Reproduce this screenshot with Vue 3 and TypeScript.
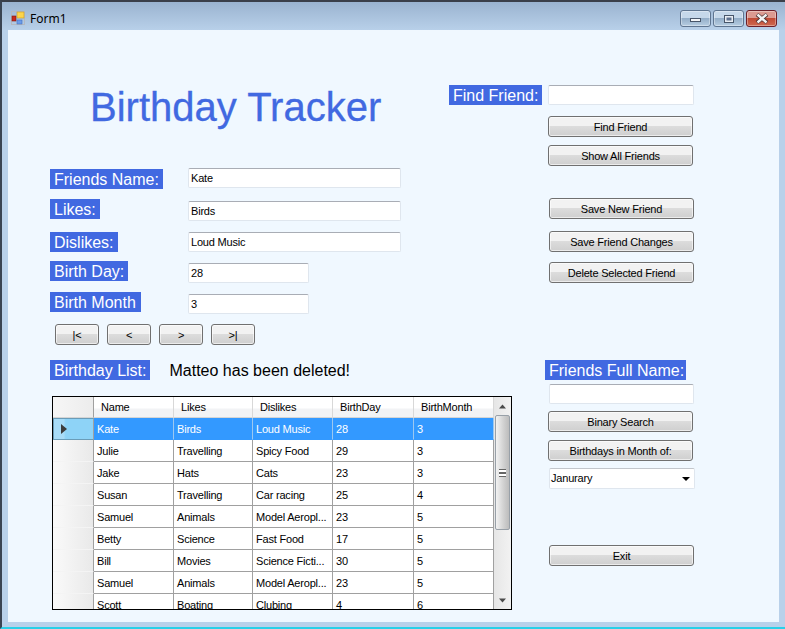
<script setup lang="ts">
interface Friend {
  name: string
  likes: string
  dislikes: string
  day: string
  month: string
}

const friends: Friend[] = [
  { name: 'Kate', likes: 'Birds', dislikes: 'Loud Music', day: '28', month: '3' },
  { name: 'Julie', likes: 'Travelling', dislikes: 'Spicy Food', day: '29', month: '3' },
  { name: 'Jake', likes: 'Hats', dislikes: 'Cats', day: '23', month: '3' },
  { name: 'Susan', likes: 'Travelling', dislikes: 'Car racing', day: '25', month: '4' },
  { name: 'Samuel', likes: 'Animals', dislikes: 'Model Aeropl...', day: '23', month: '5' },
  { name: 'Betty', likes: 'Science', dislikes: 'Fast Food', day: '17', month: '5' },
  { name: 'Bill', likes: 'Movies', dislikes: 'Science Ficti...', day: '30', month: '5' },
  { name: 'Samuel', likes: 'Animals', dislikes: 'Model Aeropl...', day: '23', month: '5' },
  { name: 'Scott', likes: 'Boating', dislikes: 'Clubing', day: '4', month: '6' }
]

const headers = ['Name', 'Likes', 'Dislikes', 'BirthDay', 'BirthMonth']
const navButtons = ['|<', '<', '>', '>|']
</script>

<template>
  <div class="window">
    <header class="titlebar">
      <svg class="appicon" width="16" height="16" viewBox="0 0 16 16">
        <rect x="0.5" y="0.5" width="13" height="13" fill="none" stroke="#b5b9c0" />
        <rect x="1" y="5" width="4" height="5" fill="#c8281c" stroke="#7c1a12" stroke-width="0.6" />
        <rect x="6" y="1" width="7" height="6" fill="#fcd44c" stroke="#c89a20" stroke-width="0.6" />
        <rect x="6" y="9" width="5" height="4" fill="#6c9ce8" stroke="#4470c0" stroke-width="0.6" />
      </svg>
      <span class="title">Form1</span>
      <div class="controls">
        <div class="ctl">
          <svg width="14" height="8" viewBox="0 0 14 8"><rect x="1.5" y="3.5" width="10" height="3" fill="#f4f6f8" stroke="#48566a" /></svg>
        </div>
        <div class="ctl">
          <svg width="14" height="10" viewBox="0 0 14 10"><rect x="2.5" y="1.5" width="9" height="7" fill="#e8edf3" stroke="#48566a" /><rect x="4.5" y="3.5" width="5" height="3" fill="#5f7290" /></svg>
        </div>
        <div class="ctl close">
          <svg width="16" height="11" viewBox="0 0 16 11"><path d="M3 1.5 L13 9.5 M13 1.5 L3 9.5" stroke="#4a3030" stroke-width="4" /><path d="M3.5 1.5 L12.5 9.5 M12.5 1.5 L3.5 9.5" stroke="#f2f2f2" stroke-width="2.4" /></svg>
        </div>
      </div>
    </header>

    <main class="client">
      <section class="top">
        <div class="details">
          <h1 class="heading">Birthday Tracker</h1>
          <div class="row r1"><span class="label">Friends Name:</span><div class="input long">Kate</div></div>
          <div class="row r2"><span class="label">Likes:</span><div class="input long in2">Birds</div></div>
          <div class="row r3"><span class="label">Dislikes:</span><div class="input long">Loud Music</div></div>
          <div class="row r4"><span class="label">Birth Day:</span><div class="input short in2">28</div></div>
          <div class="row r5"><span class="label wide">Birth Month</span><div class="input short in2">3</div></div>
          <div class="nav">
            <button v-for="n in navButtons" :key="n" class="btn navbtn">{{ n }}</button>
          </div>
        </div>
        <div class="actions">
          <div class="find"><span class="label">Find Friend:</span><div class="input findinput"></div></div>
          <button class="btn b1">Find Friend</button>
          <button class="btn b2">Show All Friends</button>
          <button class="btn b3">Save New Friend</button>
          <button class="btn b4">Save Friend Changes</button>
          <button class="btn b5">Delete Selected Friend</button>
        </div>
      </section>

      <section class="bottom">
        <div class="listside">
          <div class="listhead">
            <span class="label">Birthday List:</span>
            <span class="message">Matteo has been deleted!</span>
          </div>
          <div class="grid">
            <div class="gridmain">
              <div class="hrow">
                <div class="corner"></div>
                <div v-for="h in headers" :key="h" class="hcell">{{ h }}</div>
              </div>
              <div v-for="(f, i) in friends" :key="i" class="drow" :class="{ selected: i === 0 }">
                <div class="rowhead">
                  <svg v-if="i === 0" width="6" height="10" viewBox="0 0 6 10"><path d="M0 0 L6 5 L0 10 Z" fill="#3c3c3c" /></svg>
                </div>
                <div class="cell">{{ f.name }}</div>
                <div class="cell">{{ f.likes }}</div>
                <div class="cell">{{ f.dislikes }}</div>
                <div class="cell">{{ f.day }}</div>
                <div class="cell">{{ f.month }}</div>
              </div>
            </div>
            <div class="scroll">
              <svg class="arrow" width="9" height="5" viewBox="0 0 9 5"><path d="M4.5 0.5 L8 4.5 L1 4.5 Z" fill="#4a4a4a" /></svg>
              <div class="thumb"><span class="grip"></span></div>
              <svg class="arrow down" width="9" height="5" viewBox="0 0 9 5"><path d="M1 0.5 L8 0.5 L4.5 4.5 Z" fill="#4a4a4a" /></svg>
            </div>
          </div>
        </div>
        <div class="searchside">
          <span class="label">Friends Full Name:</span>
          <div class="input fullname"></div>
          <button class="btn s1">Binary Search</button>
          <button class="btn s2">Birthdays in Month of:</button>
          <div class="combo">
            <span>Janurary</span>
            <svg width="8" height="4" viewBox="0 0 8 4"><path d="M0 0 L8 0 L4 4 Z" fill="#000" /></svg>
          </div>
          <button class="btn exit">Exit</button>
        </div>
      </section>
    </main>
  </div>
</template>

<style>
html, body { margin: 0; padding: 0; background: #b9d1ea; }
</style>

<style scoped>
.window {
  width: 785px;
  height: 629px;
  box-sizing: border-box;
  display: flex;
  flex-direction: column;
  background: #b9d1ea;
  border-top: 2px solid #3a3f4a;
  border-left: 2px solid #3a4452;
  border-bottom: 2px solid #2ad0e8;
  font-family: "Liberation Sans", Arial, sans-serif;
  overflow: hidden;
}
.titlebar {
  height: 28px;
  flex: none;
  display: flex;
  align-items: flex-start;
  padding-left: 9px;
  background: linear-gradient(#9ab3d0, #b8d0e9);
}
.appicon { margin-top: 9px; }
.title {
  margin-left: 3px;
  margin-top: 8px;
  font: 12px/18px "Noto Sans", sans-serif;
  color: #000;
}
.controls {
  margin-left: auto;
  margin-right: 8px;
  margin-top: 8px;
  display: flex;
  gap: 2px;
}
.ctl {
  width: 31px;
  height: 17px;
  box-sizing: border-box;
  border: 1px solid #5f7590;
  border-radius: 3px;
  display: flex;
  align-items: center;
  justify-content: center;
  background: linear-gradient(#c6d8ea 0 45%, #94aec8 50%, #b6cde2);
  box-shadow: inset 0 0 0 1px rgba(255,255,255,.35);
}
.ctl.close {
  border-color: #6c1f28;
  background: linear-gradient(#dc9a90 0 45%, #c04a34 50%, #cf6a50);
}
.client {
  width: 771px;
  height: 592px;
  margin-left: 6px;
  background: #f0f8ff;
  display: flex;
  flex-direction: column;
}
.top { display: flex; height: 330px; flex: none; }
.details { margin-left: 42px; width: 351px; }
.heading {
  margin: 55px 0 0 40px;
  height: 44px;
  font: 400 40px/44px "Liberation Sans", Arial, sans-serif;
  -webkit-text-stroke: 0.3px #4169e1;
  color: #4169e1;
  white-space: nowrap;
}
.label {
  display: inline-block;
  height: 20px;
  line-height: 22px;
  padding: 0 4px;
  background: #4169e1;
  color: #fff;
  font-size: 16px;
  white-space: nowrap;
  flex: none;
}
.label.wide { padding-right: 5px; }
.row { display: flex; height: 20px; width: 351px; }
.row .input { margin-left: auto; }
.row.r1 { margin-top: 39px; }
.row.r1 .label { margin-top: 1px; }
.row.r2 { margin-top: 11px; }
.row.r3 { margin-top: 13px; }
.row.r4 { margin-top: 9px; }
.row.r5 { margin-top: 11px; }
.input {
  box-sizing: border-box;
  height: 20px;
  background: #fff;
  border: 1px solid #dfe6ee;
  border-top-color: #a9adb5;
  border-radius: 2px;
  font-size: 11px;
  letter-spacing: -0.2px;
  line-height: 18px;
  padding-left: 2px;
  color: #000;
}
.input.long { width: 213px; }
.input.short { width: 121px; margin-right: 92px; }
.input.in2 { margin-top: 2px; }
.nav { display: flex; gap: 8px; margin: 12px 0 0 5px; }
.btn {
  box-sizing: border-box;
  width: 145px;
  height: 21px;
  padding: 0;
  display: block;
  border: 1px solid #707070;
  border-radius: 3px;
  background: linear-gradient(#f2f2f2 0 45%, #dcdcdc 50%, #cfcfcf);
  box-shadow: inset 0 0 0 1px rgba(255,255,255,.6);
  font: 11px "Liberation Sans", Arial, sans-serif;
  letter-spacing: -0.2px;
  color: #000;
  text-align: center;
}
.navbtn { width: 44px; }
.actions { margin-left: 48px; width: 250px; }
.find { display: flex; margin-top: 55px; }
.find .label { width: 93px; box-sizing: border-box; }
.findinput { width: 146px; margin-left: 6px; }
.b1 { margin: 11px 0 0 99px; }
.b2 { margin: 8px 0 0 99px; }
.b3 { margin: 32px 0 0 100px; }
.b4 { margin: 12px 0 0 100px; }
.b5 { margin: 10px 0 0 100px; }
.bottom { display: flex; flex: 1; min-height: 0; }
.listside { margin-left: 42px; width: 495px; flex: none; }
.listhead { display: flex; align-items: flex-start; height: 20px; }
.message { margin-left: 19px; font-size: 16px; line-height: 22px; color: #000; white-space: nowrap; }
.grid {
  box-sizing: border-box;
  width: 460px;
  height: 214px;
  margin: 16px 0 0 2px;
  border: 1px solid #000;
  display: flex;
  background: #f0f0f0;
  overflow: hidden;
}
.gridmain { width: 441px; flex: none; overflow: hidden; background: #fff; }
.hrow { display: flex; height: 21px; }
.corner {
  width: 41px;
  box-sizing: border-box;
  border-right: 1px solid #a0a0a0;
  border-bottom: 1px solid #d5d5d5;
  background: linear-gradient(90deg, #f6f6f6, #ececec);
}
.hcell {
  width: 80px;
  box-sizing: border-box;
  padding-left: 7px;
  border-right: 1px solid #d8d8d8;
  border-bottom: 1px solid #d5d5d5;
  font-size: 11px;
  letter-spacing: -0.2px;
  line-height: 20px;
  white-space: nowrap;
  background: linear-gradient(#fff 0 55%, #f2f3f5 60%);
  color: #000;
}
.hcell:nth-child(3) { width: 79px; }
.hcell:nth-child(5) { width: 81px; }
.drow { display: flex; height: 22px; }
.rowhead {
  width: 41px;
  box-sizing: border-box;
  flex: none;
  border-right: 1px solid #a0a0a0;
  border-bottom: 1px solid #f4f4f4;
  background: linear-gradient(90deg, #fafafa, #e9e9e9);
  display: flex;
  align-items: center;
  padding-left: 7px;
}
.selected .rowhead {
  background: linear-gradient(90deg, #a8dcf8 0 25%, #8ed3f7 30%);
  border: 1px solid #6a9cb8;
  border-right-color: #a0a0a0;
}
.cell {
  width: 80px;
  box-sizing: border-box;
  flex: none;
  padding-left: 3px;
  border-right: 1px solid #a0a0a0;
  border-bottom: 1px solid #a0a0a0;
  font-size: 11px;
  letter-spacing: -0.2px;
  line-height: 22px;
  color: #000;
  white-space: nowrap;
  overflow: hidden;
}
.cell:nth-child(3) { width: 79px; }
.cell:nth-child(5) { width: 81px; }
.selected .cell {
  background: #3399ff;
  color: #fff;
  border-bottom-color: #3399ff;
  border-right-color: #9cc8f0;
}
.scroll {
  flex: 1;
  display: flex;
  flex-direction: column;
  align-items: center;
  background: linear-gradient(90deg, #e6e6e6, #f2f2f2);
}
.arrow { margin-top: 7px; flex: none; }
.thumb {
  box-sizing: border-box;
  width: 15px;
  height: 115px;
  margin-top: 6px;
  border: 1px solid #98a0a8;
  border-radius: 2px;
  background: linear-gradient(90deg, #f2f2f2, #d0d0d0 60%, #bcbcbc);
  display: flex;
  align-items: center;
  justify-content: center;
}
.grip {
  width: 7px;
  height: 6px;
  border-top: 1px solid #666;
  border-bottom: 1px solid #666;
  background: linear-gradient(#fff 0 40%, #666 40% 60%, #fff 60%);
}
.arrow.down { margin-top: auto; margin-bottom: 6px; }
.searchside { display: flex; flex-direction: column; align-items: flex-start; width: 160px; }
.searchside .label { width: 141px; box-sizing: border-box; }
.fullname { width: 145px; margin: 4px 0 0 4px; }
.s1 { margin: 7px 0 0 3px; }
.s2 { margin: 8px 0 0 3px; }
.combo {
  box-sizing: border-box;
  width: 146px;
  height: 21px;
  margin: 7px 0 0 4px;
  padding: 0 4px 0 1px;
  background: #fff;
  border: 1px solid #dfe6ee;
  border-top-color: #c2c6cc;
  border-radius: 2px;
  display: flex;
  align-items: center;
  justify-content: space-between;
  font-size: 11px;
  letter-spacing: -0.2px;
  color: #000;
}
.combo span { margin-top: -1px; }
.exit { margin: 56px 0 0 4px; }
</style>
